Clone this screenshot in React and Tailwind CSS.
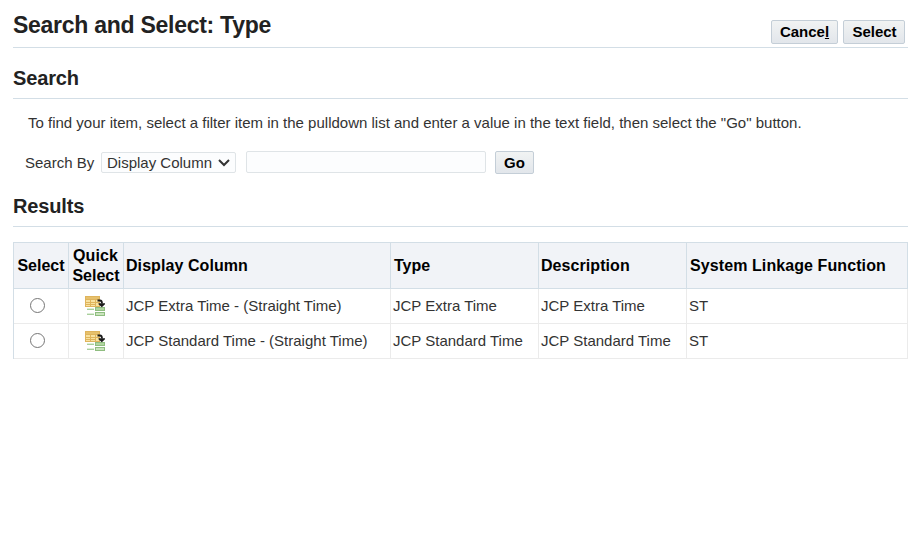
import React from "react";

const columns = [
  ["Display Column", "pl-[2px] tracking-[0.07px]"],
  ["Type", "pl-[3px]"],
  ["Description", "pl-[2px] tracking-[0.07px]"],
  ["System Linkage Function", "pl-[3px] tracking-[0.09px]"],
];
const rows = [
  ["JCP Extra Time - (Straight Time)", "JCP Extra Time", "JCP Extra Time", "ST"],
  ["JCP Standard Time - (Straight Time)", "JCP Standard Time", "JCP Standard Time", "ST"],
];
const grid = "grid grid-cols-[55px_55px_267px_148px_148px_221px]";

function Button({ className, children }) {
  return (
    <button
      className={`flex items-center justify-center rounded-[2px] border border-[#c4ced7] bg-linear-to-b from-[#f1f3f3] to-[#e2e6eb] text-[15px] leading-none font-bold whitespace-nowrap text-black ${className}`}
    >
      {children}
    </button>
  );
}

function QuickSelectIcon() {
  return (
    <svg width="22" height="22" viewBox="0 0 22 22">
      <rect x="1" y="1" width="15" height="11" fill="#dfb45c" />
      <rect x="2" y="2" width="13" height="2" fill="#e6c06c" />
      <path d="M2 5h4v2H2zM7 5h4v2H7zM12 5h3v2h-3zM2 8h4v1H2zM7 8h4v1H7zM2 10h4v1H2zM7 10h4v1H7zM12 8h3v3h-3z" fill="#f8e2a0" />
      <rect x="11" y="12" width="10" height="4" fill="#8fbd80" />
      <rect x="12" y="13" width="8" height="2" fill="#b0d59f" />
      <rect x="11" y="17" width="10" height="4" fill="#8fbd80" />
      <rect x="12" y="18" width="8" height="2" fill="#c9e4bc" />
      <path d="M3 14h7v1H3zM3 19h7v1H3z" fill="#a9cf9d" />
      <path d="M3 13h7v1H3zM3 18h7v1H3z" fill="#dceed6" />
      <path d="M13.500 5.500H16Q18 5.500 18 8.500" fill="none" stroke="#1b1b1b" strokeWidth="1.800" />
      <path d="M14.500 8.200h6.500v1L17.800 12.300 14.500 9.200z" fill="#1b1b1b" />
    </svg>
  );
}

export default function App() {
  return (
    <main className="h-[552px] w-[920px] overflow-hidden bg-white pr-3 pl-[13px] font-['Liberation_Sans',Arial,sans-serif] text-[15px] text-[#333]">
      <header className="flex h-12 justify-between border-b border-[#d3dee6] pr-[3px]">
        <h1 className="pt-[10px] text-[23px] leading-[30px] font-bold tracking-[-0.27px] text-[#222]">Search and Select: Type</h1>
        <div className="flex gap-[5px] pt-5">
          <Button className="h-6 w-[67px] pb-[2px]">
            <span>Cance<u>l</u></span>
          </Button>
          <Button className="h-6 w-[62px] pb-[2px] pl-px">Select</Button>
        </div>
      </header>

      <h2 className="h-[51px] border-b border-[#d3dee6] pt-[18px] text-[20px] leading-6 font-bold tracking-[-0.15px] text-[#222]">Search</h2>
      <p className="pt-[14px] pl-[15px] leading-5 whitespace-nowrap">
        To find your item, select a filter item in the pulldown list and enter a value in the text field, then select the "Go" button.
      </p>
      <div className="mt-[18px] flex h-6 pl-3">
        <label className="w-[76px] leading-[23px] whitespace-nowrap">Search By</label>
        <div className="mt-px flex h-[21px] w-[135px] items-center justify-between rounded-[2px] border border-[#dfe4e7] bg-[#fcfdfe] pr-[5px] pl-[5px] whitespace-nowrap">
          <span className="pt-px leading-[20px]">Display Column</span>
          <svg width="12" height="8" viewBox="0 0 12 8" fill="none" stroke="#333" strokeWidth="2">
            <path d="M1 1 6 6 11 1" />
          </svg>
        </div>
        <input className="ml-[10px] h-[22px] w-[240px] rounded-[2px] border border-[#dfe4e7] bg-[#fcfdfe] px-1" />
        <Button className="ml-[9px] h-[23px] w-[39px]">Go</Button>
      </div>

      <h2 className="mt-[2px] h-[50px] border-b border-[#d3dee6] pt-[17px] text-[20px] leading-6 font-bold tracking-[-0.15px] text-[#222]">Results</h2>

      <section className="mt-[15px] w-[895px] border-t border-l border-[#d3dee6]">
        <div className={`${grid} h-[46px] bg-[#f1f3f7] text-[16px] leading-5 font-bold text-black`}>
          <div className="flex items-center justify-center border-r border-b border-[#d3dee6]">Select</div>
          <div className="flex items-center justify-center border-r border-b border-[#d3dee6] text-center">
            <span>
              <span className="mr-px tracking-[0.1px]">Quick</span>
              <br />
              Select
            </span>
          </div>
          {columns.map(([label, style]) => (
            <div key={label} className={`flex items-center border-r border-b border-[#d3dee6] whitespace-nowrap ${style}`}>{label}</div>
          ))}
        </div>
        {rows.map((r) => (
          <div key={r[0]} className={`${grid} h-[35px]`}>
            <div className="flex items-center justify-center border-r border-b border-[#ebebeb] pr-[7px] pb-[2px]">
              <span className="size-[15px] rounded-full border border-[#767676] bg-white" />
            </div>
            <div className="flex items-center justify-center border-r border-b border-[#ebebeb] pr-[2px]">
              <QuickSelectIcon />
            </div>
            {r.map((v, i) => (
              <div key={i} className="flex items-center border-r border-b border-[#ebebeb] pl-[2px] whitespace-nowrap">{v}</div>
            ))}
          </div>
        ))}
      </section>
    </main>
  );
}
